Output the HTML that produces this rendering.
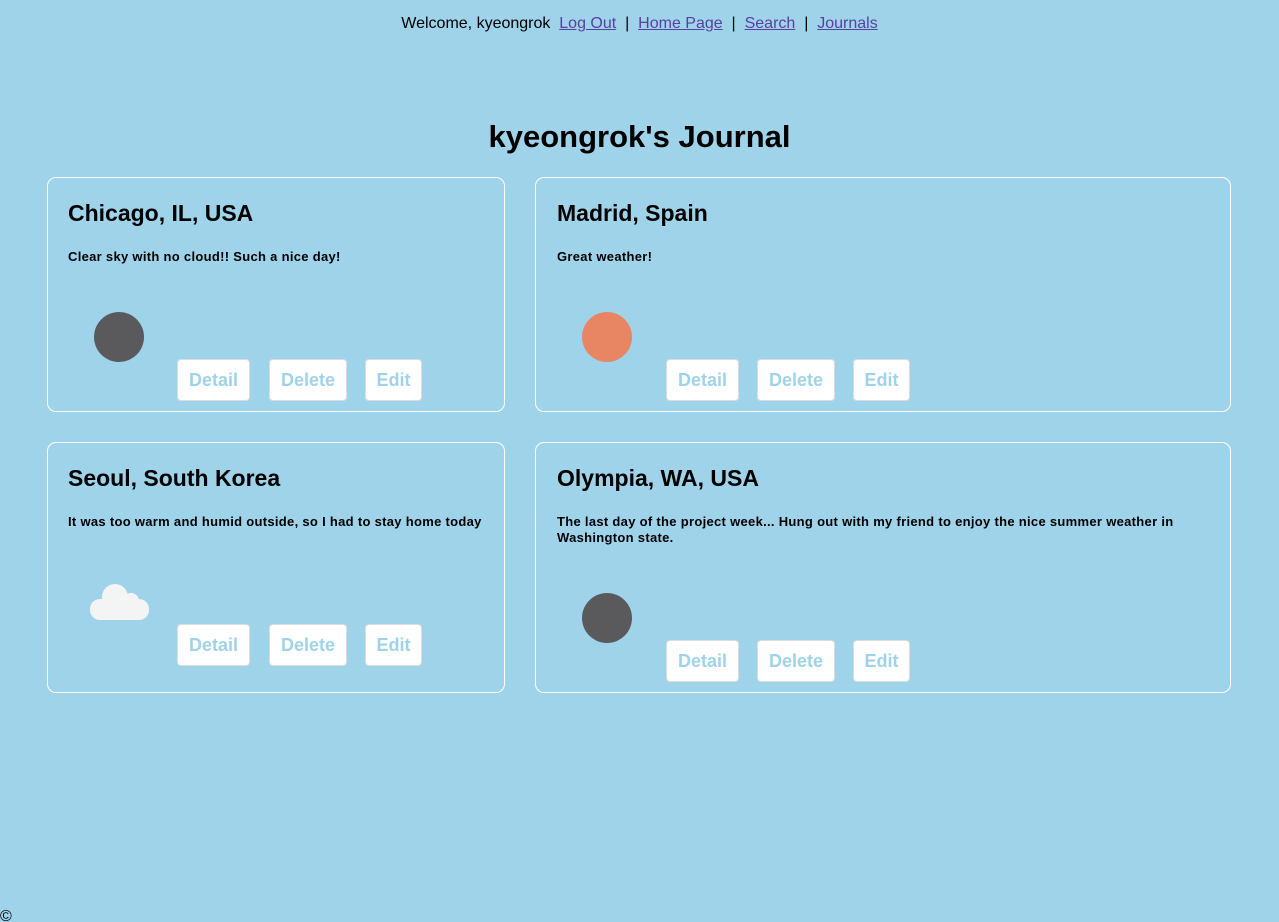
<!DOCTYPE html>
<html><head><meta charset="utf-8"><style>
html,body{margin:0;width:1279px;height:922px;overflow:hidden}
body{background:#9fd3ea;font-family:"Liberation Sans",sans-serif;position:relative}
.nav{position:absolute;top:15px;left:0;width:1279px;text-align:center;font-size:16px;color:#000}
.nav a{color:#5a3fa0;text-decoration:underline}
h1{position:absolute;top:119px;left:0;width:1279px;text-align:center;margin:0;font-size:31px;font-weight:bold}
.card{position:absolute;border:1px solid #fff;border-radius:9px;box-sizing:border-box}
.card h2{position:absolute;left:20px;top:22px;margin:0;font-size:23px;font-weight:bold}
.card p{position:absolute;left:20px;top:71px;margin:0;font-size:13px;font-weight:bold;line-height:16px;right:16px;letter-spacing:0.3px}
.btn{position:absolute;background:#fff;border:1px solid #ddd;border-radius:4px;color:#9fd3ea;font-weight:bold;font-size:18px;height:42px;line-height:40px;text-align:center;box-sizing:border-box}
.dot{position:absolute;width:50px;height:50px;border-radius:50%}
</style></head><body>
<div class="nav">Welcome, kyeongrok&nbsp; <a>Log Out</a> &nbsp;|&nbsp; <a>Home Page</a> &nbsp;|&nbsp; <a>Search</a> &nbsp;|&nbsp; <a>Journals</a></div>
<h1>kyeongrok's Journal</h1>

<div class="card" style="left:47px;top:177px;width:458px;height:235px">
<h2>Chicago, IL, USA</h2><p>Clear sky with no cloud!! Such a nice day!</p>
<div class="dot" style="left:46px;top:134px;background:#5a595b"></div>
<div class="btn" style="left:129px;top:181px;width:73px">Detail</div>
<div class="btn" style="left:221px;top:181px;width:78px">Delete</div>
<div class="btn" style="left:317px;top:181px;width:57px">Edit</div>
</div>

<div class="card" style="left:535px;top:177px;width:696px;height:235px">
<h2 style="left:21px">Madrid, Spain</h2><p style="left:21px">Great weather!</p>
<div class="dot" style="left:46px;top:134px;background:#e88563"></div>
<div class="btn" style="left:130px;top:181px;width:73px">Detail</div>
<div class="btn" style="left:221px;top:181px;width:78px">Delete</div>
<div class="btn" style="left:317px;top:181px;width:57px">Edit</div>
</div>

<div class="card" style="left:47px;top:442px;width:458px;height:251px">
<h2>Seoul, South Korea</h2><p>It was too warm and humid outside, so I had to stay home today</p>
<svg style="position:absolute;left:40px;top:139px" width="62" height="42"><g fill="#f4f4f4"><circle cx="27" cy="15" r="13"/><circle cx="43" cy="19" r="8"/><rect x="2" y="17" width="59" height="21" rx="10"/></g></svg>
<div class="btn" style="left:129px;top:181px;width:73px">Detail</div>
<div class="btn" style="left:221px;top:181px;width:78px">Delete</div>
<div class="btn" style="left:317px;top:181px;width:57px">Edit</div>
</div>

<div class="card" style="left:535px;top:442px;width:696px;height:251px">
<h2 style="left:21px">Olympia, WA, USA</h2><p style="left:21px">The last day of the project week... Hung out with my friend to enjoy the nice summer weather in Washington state.</p>
<div class="dot" style="left:46px;top:150px;background:#5a595b"></div>
<div class="btn" style="left:130px;top:197px;width:73px">Detail</div>
<div class="btn" style="left:221px;top:197px;width:78px">Delete</div>
<div class="btn" style="left:317px;top:197px;width:57px">Edit</div>
</div>
<div style="position:absolute;left:0;top:908px;font-size:16px;line-height:18px">©</div>
</body></html>
